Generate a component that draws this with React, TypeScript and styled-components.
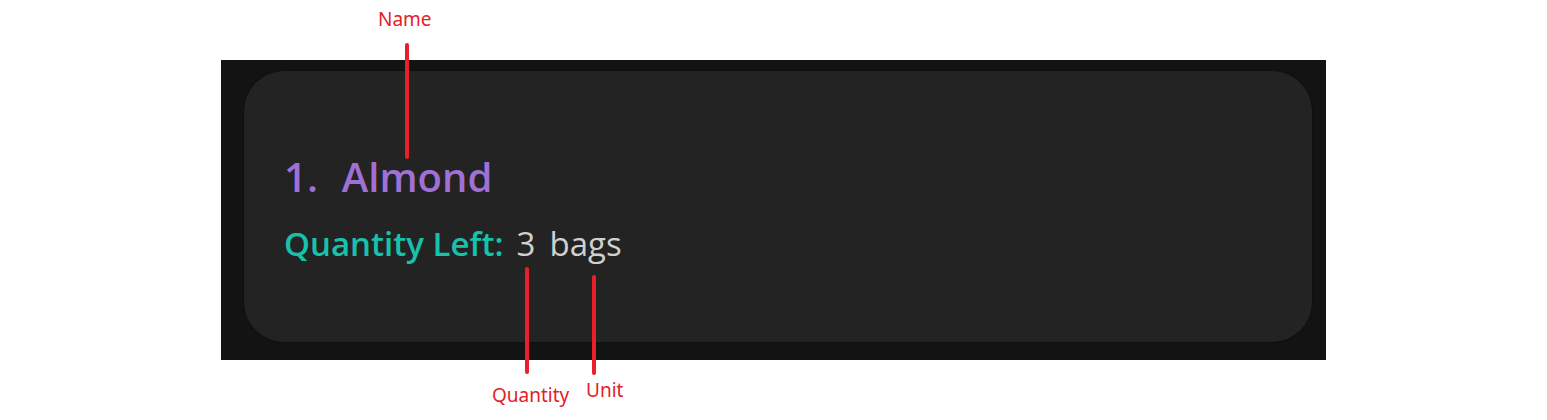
import React from 'react';
import styled, { createGlobalStyle } from 'styled-components';

type Item = {
  index: number
  name: string
  quantity: number
  unit: string
};

type Note = {
  text: string
  x: number
  y: number
};

type Line = {
  x: number
  top: number
  bottom: number
};

const item: Item = { index: 1, name: 'Almond', quantity: 3, unit: 'bags' };

const notes: Note[] = [
  { text: 'Name', x: 378, y: 10 },
  { text: 'Quantity', x: 492, y: 386 },
  { text: 'Unit', x: 586, y: 381 }
];

const lines: Line[] = [
  { x: 405, top: 43, bottom: 159 },
  { x: 525, top: 267, bottom: 374 },
  { x: 592, top: 275, bottom: 375 }
];

const GlobalStyle = createGlobalStyle`
  html, body {
    margin: 0;
    padding: 0;
    background: #ffffff;
  }

  body {
    font-family: "Open Sans", "Noto Sans", sans-serif;
  }
`;

const Page = styled.div`
  position: relative;
  width: 1547px;
  height: 420px;
  padding: 60px 0 0 221px;
  box-sizing: border-box;
  overflow: hidden;
`;

const Panel = styled.div`
  width: 1105px;
  height: 300px;
  background: #131313;
  padding: 11px 14px 18px 23px;
  box-sizing: border-box;
  display: flex;
`;

const Card = styled.div`
  flex: 1;
  background: #232323;
  border-radius: 40px;
  box-shadow: 0 0 2px rgba(0, 0, 0, 0.6);
  padding: 79px 40px 0 40px;
  display: flex;
  flex-direction: column;
  gap: 18px;
`;

const Title = styled.div`
  display: flex;
  color: #a070d6;
  font-size: 40px;
  line-height: 53px;
  font-weight: 600;
`;

const Index = styled.span`
  margin-right: 24px;
`;

const Detail = styled.div`
  display: flex;
  align-items: baseline;
  font-size: 33px;
  line-height: 46px;
`;

const DetailLabel = styled.span`
  color: #16c2ac;
  font-weight: 600;
  margin-right: 13px;
`;

const Value = styled.span`
  color: #d0d0d0;
  font-weight: 400;
  margin-right: 14px;
`;

const Label = styled.div<{ $x: number; $y: number }>`
  position: absolute;
  left: ${(p) => p.$x}px;
  top: ${(p) => p.$y}px;
  font-family: "Noto Sans", "Open Sans", sans-serif;
  font-size: 19px;
  line-height: 19px;
  color: #e3202a;
  white-space: nowrap;
`;

const Pointer = styled.div<{ $x: number; $top: number; $bottom: number }>`
  position: absolute;
  left: ${(p) => p.$x}px;
  top: ${(p) => p.$top}px;
  width: 4px;
  height: ${(p) => p.$bottom - p.$top}px;
  border-radius: 2px;
  background: #e8202a;
`;

const App = (): React.ReactElement => {
  return <>
    <GlobalStyle />
    <Page>
      <Panel>
        <Card>
          <Title>
            <Index>{item.index}.</Index>
            <span>{item.name}</span>
          </Title>
          <Detail>
            <DetailLabel>Quantity Left:</DetailLabel>
            <Value>{item.quantity}</Value>
            <Value>{item.unit}</Value>
          </Detail>
        </Card>
      </Panel>
      {lines.map((l, i) => <Pointer
        $bottom={l.bottom}
        $top={l.top}
        $x={l.x}
        key={i}
      />)}
      {notes.map((n) => <Label
        $x={n.x}
        $y={n.y}
        key={n.text}
      >{n.text}</Label>)}
    </Page>
  </>;
};

export default App;
